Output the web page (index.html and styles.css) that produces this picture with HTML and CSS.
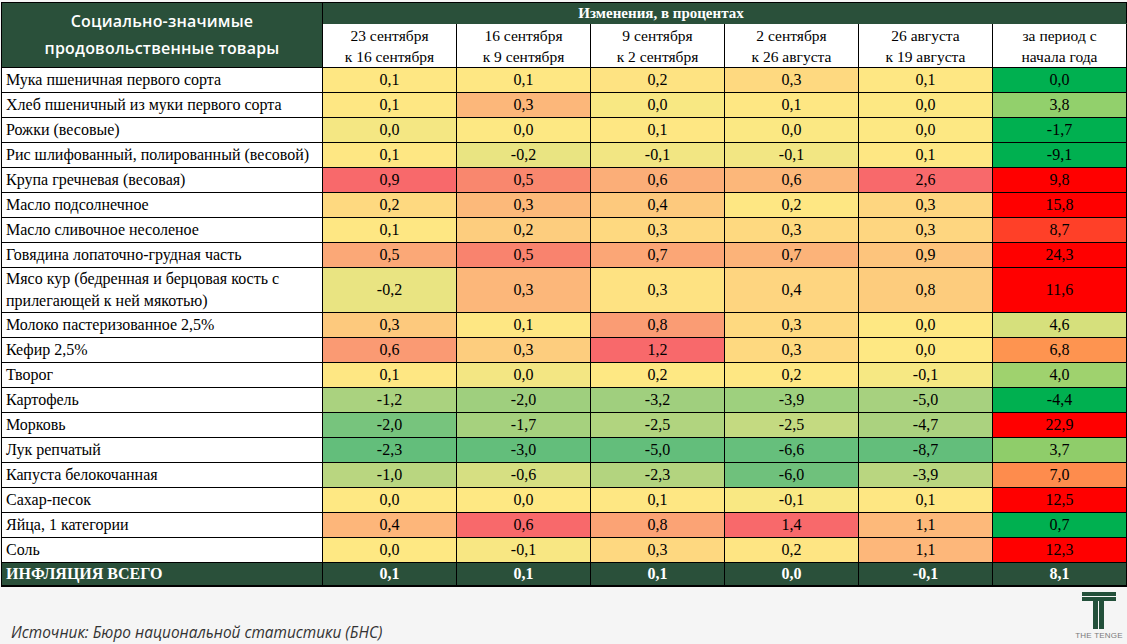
FILE: index.html
```html
<!DOCTYPE html>
<html lang="ru">
<head>
<meta charset="utf-8">
<title>Социально-значимые продовольственные товары</title>
<link rel="stylesheet" href="styles.css">
</head>
<body>
<main class="page">
<table class="grid">
  <colgroup>
    <col class="c-name"><col class="c-val"><col class="c-val"><col class="c-val"><col class="c-val"><col class="c-val"><col class="c-val">
  </colgroup>
  <thead>
    <tr class="title-row">
      <th class="corner" rowspan="2">Социально-значимые<br>продовольственные товары</th>
      <th class="title" colspan="6">Изменения, в процентах</th>
    </tr>
    <tr class="period-row">
      <th>23 сентября<br>к 16 сентября</th>
      <th>16 сентября<br>к 9 сентября</th>
      <th>9 сентября<br>к 2 сентября</th>
      <th>2 сентября<br>к 26 августа</th>
      <th>26 августа<br>к 19 августа</th>
      <th>за период с<br>начала года</th>
    </tr>
  </thead>
  <tbody>
    <tr><td class="name">Мука пшеничная первого сорта</td><td style="background:#fee783">0,1</td><td style="background:#fee783">0,1</td><td style="background:#fee382">0,2</td><td style="background:#fed980">0,3</td><td style="background:#fee783">0,1</td><td style="background:#00b050">0,0</td></tr>
    <tr><td class="name">Хлеб пшеничный из муки первого сорта</td><td style="background:#fee783">0,1</td><td style="background:#fcb77a">0,3</td><td style="background:#f8e883">0,0</td><td style="background:#fee783">0,1</td><td style="background:#fde883">0,0</td><td style="background:#92d06c">3,8</td></tr>
    <tr><td class="name">Рожки (весовые)</td><td style="background:#f4e783">0,0</td><td style="background:#fde883">0,0</td><td style="background:#fee783">0,1</td><td style="background:#fbe883">0,0</td><td style="background:#fde883">0,0</td><td style="background:#00b050">-1,7</td></tr>
    <tr><td class="name">Рис шлифованный, полированный (весовой)</td><td style="background:#fee783">0,1</td><td style="background:#e9e482">-0,2</td><td style="background:#f2e683">-0,1</td><td style="background:#f2e683">-0,1</td><td style="background:#fee783">0,1</td><td style="background:#00b050">-9,1</td></tr>
    <tr><td class="name">Крупа гречневая (весовая)</td><td style="background:#f8696b">0,9</td><td style="background:#f9876e">0,5</td><td style="background:#fbae78">0,6</td><td style="background:#fcb77a">0,6</td><td style="background:#f8696b">2,6</td><td style="background:#ff0000">9,8</td></tr>
    <tr><td class="name">Масло подсолнечное</td><td style="background:#fed980">0,2</td><td style="background:#fcb97a">0,3</td><td style="background:#fdc97d">0,4</td><td style="background:#fee783">0,2</td><td style="background:#fed680">0,3</td><td style="background:#ff0000">15,8</td></tr>
    <tr><td class="name">Масло сливочное несоленое</td><td style="background:#fee783">0,1</td><td style="background:#fdcd7e">0,2</td><td style="background:#fed980">0,3</td><td style="background:#fed980">0,3</td><td style="background:#fed680">0,3</td><td style="background:#ff4028">8,7</td></tr>
    <tr><td class="name">Говядина лопаточно-грудная часть</td><td style="background:#fba877">0,5</td><td style="background:#f9836e">0,5</td><td style="background:#fba676">0,7</td><td style="background:#fcb379">0,7</td><td style="background:#fdc47c">0,9</td><td style="background:#ff0000">24,3</td></tr>
    <tr class="tall"><td class="name">Мясо кур (бедренная и берцовая кость с прилегающей к ней мякотью)</td><td style="background:#e9e482">-0,2</td><td style="background:#fcb77a">0,3</td><td style="background:#fee282">0,3</td><td style="background:#fed580">0,4</td><td style="background:#fdcc7d">0,8</td><td style="background:#ff0000">11,6</td></tr>
    <tr><td class="name">Молоко пастеризованное 2,5%</td><td style="background:#fdc97d">0,3</td><td style="background:#fee783">0,1</td><td style="background:#fa9c74">0,8</td><td style="background:#fed980">0,3</td><td style="background:#fee883">0,0</td><td style="background:#d6e07c">4,6</td></tr>
    <tr><td class="name">Кефир 2,5%</td><td style="background:#fa9a73">0,6</td><td style="background:#fdcd7e">0,3</td><td style="background:#f8696b">1,2</td><td style="background:#fed980">0,3</td><td style="background:#fee883">0,0</td><td style="background:#fe9450">6,8</td></tr>
    <tr><td class="name">Творог</td><td style="background:#fee783">0,1</td><td style="background:#f3e683">0,0</td><td style="background:#fee883">0,2</td><td style="background:#fee783">0,2</td><td style="background:#f6e883">-0,1</td><td style="background:#9fd26e">4,0</td></tr>
    <tr><td class="name">Картофель</td><td style="background:#aad27f">-1,2</td><td style="background:#9fcf7e">-2,0</td><td style="background:#a0cf7e">-3,2</td><td style="background:#9ed07e">-3,9</td><td style="background:#a7d17f">-5,0</td><td style="background:#00b050">-4,4</td></tr>
    <tr><td class="name">Морковь</td><td style="background:#77c47d">-2,0</td><td style="background:#a6d17e">-1,7</td><td style="background:#b1d47f">-2,5</td><td style="background:#c4da81">-2,5</td><td style="background:#abd27f">-4,7</td><td style="background:#ff0000">22,9</td></tr>
    <tr><td class="name">Лук репчатый</td><td style="background:#63be7b">-2,3</td><td style="background:#63be7b">-3,0</td><td style="background:#63be7b">-5,0</td><td style="background:#66bf7c">-6,6</td><td style="background:#63be7b">-8,7</td><td style="background:#8fcd6a">3,7</td></tr>
    <tr><td class="name">Капуста белокочанная</td><td style="background:#b9d680">-1,0</td><td style="background:#d6df82">-0,6</td><td style="background:#b3d47f">-2,3</td><td style="background:#6fc17c">-6,0</td><td style="background:#b9d680">-3,9</td><td style="background:#fe8c4d">7,0</td></tr>
    <tr><td class="name">Сахар-песок</td><td style="background:#fee883">0,0</td><td style="background:#fee883">0,0</td><td style="background:#fee783">0,1</td><td style="background:#f9e883">-0,1</td><td style="background:#fee783">0,1</td><td style="background:#ff0000">12,5</td></tr>
    <tr><td class="name">Яйца, 1 категории</td><td style="background:#fdb67a">0,4</td><td style="background:#f8696b">0,6</td><td style="background:#fba375">0,8</td><td style="background:#f8696b">1,4</td><td style="background:#fdb97a">1,1</td><td style="background:#00b050">0,7</td></tr>
    <tr><td class="name">Соль</td><td style="background:#fee883">0,0</td><td style="background:#f8e783">-0,1</td><td style="background:#fed880">0,3</td><td style="background:#fee583">0,2</td><td style="background:#fdb77a">1,1</td><td style="background:#ff0000">12,3</td></tr>
  </tbody>
  <tfoot>
    <tr class="total"><td class="name">ИНФЛЯЦИЯ ВСЕГО</td><td>0,1</td><td>0,1</td><td>0,1</td><td>0,0</td><td>-0,1</td><td>8,1</td></tr>
  </tfoot>
</table>
<footer class="foot">
  <p class="source">Источник: Бюро национальной статистики (БНС)</p>
  <div class="logo">
    <svg class="logo-mark" width="34" height="37" viewBox="0 0 34 37" aria-hidden="true">
      <rect x="0" y="0" width="34" height="4" fill="#23503a"/>
      <rect x="0" y="5" width="34" height="4" fill="#23503a"/>
      <rect x="11" y="9" width="5" height="28" fill="#23503a"/>
      <rect x="17" y="9" width="5" height="28" fill="#23503a"/>
    </svg>
    <span class="logo-text">THE TENGE</span>
  </div>
</footer>
</main>
</body>
</html>
```

FILE: styles.css
```css
html, body {
  margin: 0;
  padding: 0;
  background: #f5f5f5;
}

.page {
  width: 1127px;
  height: 644px;
  overflow: hidden;
  padding-top: 2px;
  box-sizing: border-box;
}

.grid {
  border-collapse: collapse;
  table-layout: fixed;
  width: 1126px;
  margin-left: 1px;
  font-family: "Liberation Serif", "Times New Roman", serif;
  font-size: 16px;
  color: #000;
}

.c-name { width: 321px; }
.c-val { width: 134px; }

.grid th,
.grid td {
  border: 1px solid #000;
  padding: 0;
  text-align: center;
  font-weight: normal;
}

.corner {
  background: #2a503a;
  color: #fff;
  font-family: "Open Sans", "Noto Sans", sans-serif;
  font-weight: 600 !important;
  font-size: 16px;
  line-height: 27px;
  letter-spacing: 0.2px;
}

.title-row { height: 21px; }

.title {
  background: #2a503a;
  color: #fff;
  font-weight: bold !important;
  font-size: 15px;
  line-height: 18px;
  padding-right: 127px !important;
  border-bottom-color: #2a503a !important;
}

.period-row { height: 44px; }

.period-row th {
  background: #fff;
  font-size: 15.5px;
  line-height: 21px;
}

tbody tr { height: 25px; }
tbody tr.tall { height: 45px; }

.grid td {
  line-height: 18px;
}

.grid td.name {
  text-align: left;
  padding-left: 4px;
  background: #fff;
  line-height: 22px;
}

.total {
  height: 22px;
}

.total td {
  background: #2a503a !important;
  color: #fff;
  font-weight: bold;
  border-bottom: 2px solid #000 !important;
}

.total td.name {
  background: #2a503a !important;
}

.foot {
  display: flex;
  justify-content: space-between;
  align-items: flex-start;
  padding: 5px 10px 0 11px;
}

.source {
  margin: 32px 0 0 0;
  font-family: "Open Sans", "Noto Sans", sans-serif;
  font-style: italic;
  font-size: 15.4px;
  line-height: 18px;
  color: #333;
}

.logo {
  display: flex;
  flex-direction: column;
  align-items: center;
  width: 36px;
}

.logo-mark {
  display: block;
}

.logo-text {
  font-family: "Liberation Sans", Arial, sans-serif;
  font-size: 8px;
  line-height: 9px;
  letter-spacing: 0.2px;
  color: #7a7a7a;
  white-space: nowrap;
  margin-top: 2px;
}
```
